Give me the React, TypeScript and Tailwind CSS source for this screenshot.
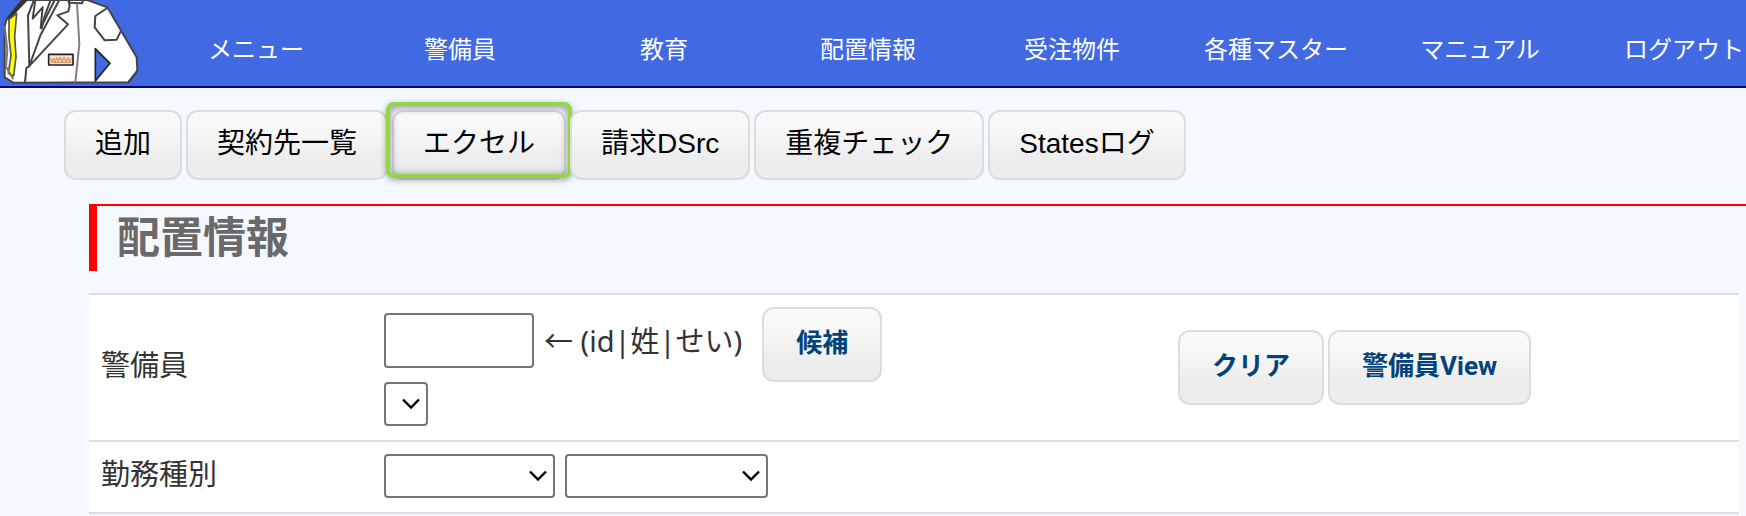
import type { ReactNode } from "react";
import { cva, type VariantProps } from "class-variance-authority";
import clsx from "clsx";

const menuItems = [
  "メニュー",
  "警備員",
  "教育",
  "配置情報",
  "受注物件",
  "各種マスター",
  "マニュアル",
  "ログアウト",
];

const toolbarItems = ["追加", "契約先一覧", "エクセル", "請求DSrc", "重複チェック", "Statesログ"];

const buttonStyles = cva(
  "shrink-0 rounded-xl border-2 border-[#d8dde1] bg-linear-to-b from-[#fafafa] via-[#f7f7f7] via-30% to-[#ededed] to-70% whitespace-nowrap",
  {
    variants: {
      variant: {
        toolbar:
          "px-[29px] pt-[14px] pb-4 font-['Liberation_Sans','Noto_Sans_CJK_JP',sans-serif] text-[28px] leading-9 text-black",
        form: "px-8 pt-[18px] pb-[21px] font-[Roboto,'Noto_Sans_CJK_JP',sans-serif] text-[26px] leading-8 font-bold text-[#00427a]",
      },
    },
  }
);

interface PanelButtonProps extends VariantProps<typeof buttonStyles> {
  children: ReactNode;
}

function PanelButton({ variant, children }: PanelButtonProps) {
  return (
    <button type="button" className={buttonStyles({ variant })}>
      {children}
    </button>
  );
}

interface SelectBoxProps {
  label: string;
  className: string;
}

function SelectBox({ label, className }: SelectBoxProps) {
  return (
    <div className={clsx("relative h-11", className)}>
      <select
        aria-label={label}
        className="h-full w-full appearance-none rounded border-2 border-[#767676] bg-white"
      />
      <svg
        className="pointer-events-none absolute top-4 right-2"
        width="18"
        height="12"
        viewBox="0 0 18 12"
        fill="none"
        stroke="#000"
        strokeWidth="2.4"
      >
        <path d="M1 1.5 9 9.5 17 1.5" />
      </svg>
    </div>
  );
}

// Guard uniform jacket, cut off at the collar
function GuardLogo() {
  return (
    <svg className="block shrink-0" width="154" height="86" viewBox="0 0 462 258" strokeLinejoin="round">
      <path
        d="M66 0 20 58 14 78 14 232 40 248 385 247 412 212 410 172 322 22 262 0Z"
        fill="#fff"
        stroke="#444"
        strokeWidth="6"
      />
      <path d="M66 0 22 52 26 66 50 36 84 0Z" fill="#333" />
      <path d="M27 58 50 40 44 110 48 170 41 228 25 220 33 166 27 112Z" fill="#ff0" stroke="#555" strokeWidth="5" />
      <g fill="none" stroke="#444" strokeWidth="6">
        <path d="M14 78 22 150 18 200 40 238" stroke="#777" />
        <path d="M102 0 84 46 88 198 79 204 75 247" />
        <path d="M106 0 98 56 128 22 122 84 164 0" />
        <path d="M178 0 122 104 88 198" />
        <path d="M152 0 134 48 124 88" />
        <path d="M205 0 209 18 205 34 172 46 204 73 84 202" />
        <path d="M205 2 211 8 246 10 250 0" />
        <path d="M231 10 238 132 226 247" stroke="#887c80" />
        <path d="M322 24 286 48 284 82 314 121 350 119 362 94" />
        <path d="M385 247 410 216" />
      </g>
      <path d="M286 146 330 190 286 243Z" fill="#4169e1" stroke="#222" strokeWidth="5" />
      <path d="M146 163H219V195H146Z" fill="#fbe4d4" stroke="#222" strokeWidth="5" />
      <path
        d="M151 174 156 184 161 174 165 185 171 173 176 184 181 172 187 185 192 172 198 185 203 173 209 185 214 173M152 187H214"
        fill="none"
        stroke="#e0986c"
        strokeWidth="4"
      />
    </svg>
  );
}

function Header() {
  return (
    <header className="flex overflow-hidden border-b-2 border-[#00008b] bg-[#4169e1]">
      <GuardLogo />
      <nav className="-mr-10 grid flex-1 grid-cols-8 items-center pt-3">
        {menuItems.map((item) => (
          <a key={item} href="#" className="text-center text-2xl whitespace-nowrap text-white">
            {item}
          </a>
        ))}
      </nav>
    </header>
  );
}

function Toolbar() {
  return (
    <div className="flex gap-1 px-16 pt-[22px]">
      {toolbarItems.map((item) => (
        <div key={item} className="relative flex">
          <PanelButton variant="toolbar">{item}</PanelButton>
          {item === "エクセル" && (
            <div className="pointer-events-none absolute -inset-x-1.5 -top-2 bottom-0.5 rounded-lg border-4 border-[#92d640] shadow-[0_2px_6px_rgba(0,0,0,0.35),inset_0_1px_8px_rgba(0,0,0,0.45)]" />
          )}
        </div>
      ))}
    </div>
  );
}

export default function App() {
  return (
    <div className="min-h-screen overflow-hidden bg-[#f4f8ff] font-['Noto_Sans','Noto_Sans_CJK_JP',sans-serif] text-[#333]">
      <Header />
      <Toolbar />
      <main className="pl-[89px]">
        <h1 className="mt-6 border-t-2 border-l-8 border-[#f00] pb-1 pl-5 text-[43px] leading-[61px] font-bold text-[#696969]">
          配置情報
        </h1>
        <div className="mt-[22px] pr-[7px]">
          <table className="w-full table-fixed border-collapse bg-white text-[29px] leading-9">
            <tbody>
              <tr className="border-y-2 border-[#ddd]">
                <th scope="row" className="w-[283px] px-3 pb-1.5 text-left font-normal">
                  <label htmlFor="guard">警備員</label>
                </th>
                <td className="px-3 pt-3 pb-3.5">
                  <div className="flex items-baseline">
                    <input
                      id="guard"
                      type="text"
                      className="mt-1.5 h-[55px] w-[150px] self-start rounded border-2 border-[#767676] bg-white px-2"
                    />
                    <span className="mr-5 ml-2.5 whitespace-nowrap">← (id|姓|せい)</span>
                    <PanelButton variant="form">候補</PanelButton>
                  </div>
                  <SelectBox label="警備員の候補" className="w-11" />
                </td>
                <td className="w-[573px] px-3">
                  <div className="flex gap-1">
                    <PanelButton variant="form">クリア</PanelButton>
                    <PanelButton variant="form">警備員View</PanelButton>
                  </div>
                </td>
              </tr>
              <tr className="border-y-2 border-[#ddd]">
                <th scope="row" className="px-3 pb-1.5 text-left font-normal">
                  勤務種別
                </th>
                <td className="px-3 pt-3 pb-3.5" colSpan={2}>
                  <div className="flex gap-2.5">
                    <SelectBox label="勤務種別" className="w-[171px]" />
                    <SelectBox label="勤務種別の詳細" className="w-[203px]" />
                  </div>
                </td>
              </tr>
            </tbody>
          </table>
        </div>
      </main>
    </div>
  );
}
